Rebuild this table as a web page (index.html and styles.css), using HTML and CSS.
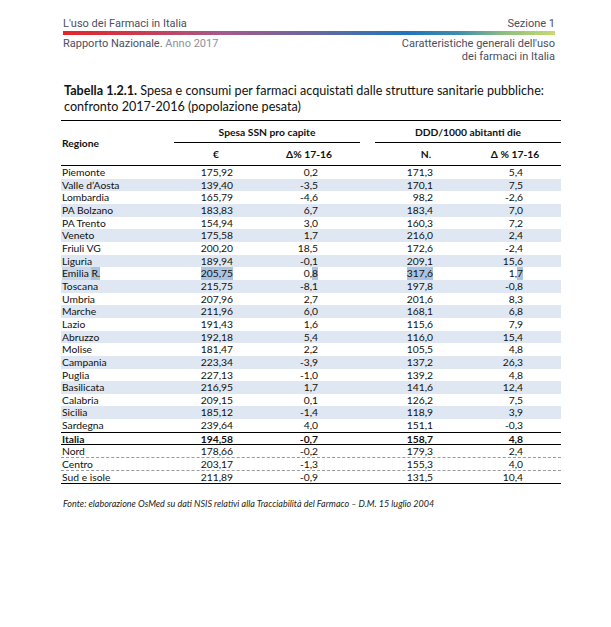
FILE: index.html
```html
<!DOCTYPE html>
<html lang="it">
<head>
<meta charset="utf-8">
<title>Tabella 1.2.1</title>
<link rel="stylesheet" href="styles.css">
</head>
<body>
<div class="page">
  <header class="running">
    <div class="run-row">
      <span>L'uso dei Farmaci in Italia</span>
      <span>Sezione 1</span>
    </div>
    <div class="bar"></div>
    <div class="run-row">
      <span>Rapporto Nazionale. <span class="muted">Anno 2017</span></span>
      <span class="right">Caratteristiche generali dell'uso<br>dei farmaci in Italia</span>
    </div>
  </header>

  <section class="content">
    <p class="caption"><b>Tabella 1.2.1.</b> Spesa e consumi per farmaci acquistati dalle strutture sanitarie pubbliche: confronto 2017-2016 (popolazione pesata)</p>

    <div class="tbl">
      <div class="thead">
        <div class="h-reg">Regione</div>
        <div class="h-group g1">Spesa SSN pro capite</div>
        <div class="h-group g2">DDD/1000 abitanti die</div>
        <div class="h-sub c2">€</div>
        <div class="h-sub c3">Δ% 17-16</div>
        <div class="h-sub c5">N.</div>
        <div class="h-sub c6">Δ % 17-16</div>
      </div>

      <div class="row"><span>Piemonte</span><span>175,92</span><span>0,2</span><i></i><span>171,3</span><span>5,4</span></div>
      <div class="row alt"><span>Valle d’Aosta</span><span>139,40</span><span>-3,5</span><i></i><span>170,1</span><span>7,5</span></div>
      <div class="row"><span>Lombardia</span><span>165,79</span><span>-4,6</span><i></i><span>98,2</span><span>-2,6</span></div>
      <div class="row alt"><span>PA Bolzano</span><span>183,83</span><span>6,7</span><i></i><span>183,4</span><span>7,0</span></div>
      <div class="row"><span>PA Trento</span><span>154,94</span><span>3,0</span><i></i><span>160,3</span><span>7,2</span></div>
      <div class="row alt"><span>Veneto</span><span>175,58</span><span>1,7</span><i></i><span>216,0</span><span>2,4</span></div>
      <div class="row"><span>Friuli VG</span><span>200,20</span><span>18,5</span><i></i><span>172,6</span><span>-2,4</span></div>
      <div class="row alt"><span>Liguria</span><span>189,94</span><span>-0,1</span><i></i><span>209,1</span><span>15,6</span></div>
      <div class="row"><span><mark class="sel-a">Emilia&nbsp;</mark><mark class="sel-b">R.</mark></span><span><mark class="sel-b">205,75</mark></span><span>0,<mark class="sel-b">8</mark></span><i></i><span><mark class="sel-b">317,6</mark></span><span>1,<mark class="sel-b">7</mark></span></div>
      <div class="row alt"><span>Toscana</span><span>215,75</span><span>-8,1</span><i></i><span>197,8</span><span>-0,8</span></div>
      <div class="row"><span>Umbria</span><span>207,96</span><span>2,7</span><i></i><span>201,6</span><span>8,3</span></div>
      <div class="row alt"><span>Marche</span><span>211,96</span><span>6,0</span><i></i><span>168,1</span><span>6,8</span></div>
      <div class="row"><span>Lazio</span><span>191,43</span><span>1,6</span><i></i><span>115,6</span><span>7,9</span></div>
      <div class="row alt"><span>Abruzzo</span><span>192,18</span><span>5,4</span><i></i><span>116,0</span><span>15,4</span></div>
      <div class="row"><span>Molise</span><span>181,47</span><span>2,2</span><i></i><span>105,5</span><span>4,8</span></div>
      <div class="row alt"><span>Campania</span><span>223,34</span><span>-3,9</span><i></i><span>137,2</span><span>26,3</span></div>
      <div class="row"><span>Puglia</span><span>227,13</span><span>-1,0</span><i></i><span>139,2</span><span>4,8</span></div>
      <div class="row alt"><span>Basilicata</span><span>216,95</span><span>1,7</span><i></i><span>141,6</span><span>12,4</span></div>
      <div class="row"><span>Calabria</span><span>209,15</span><span>0,1</span><i></i><span>126,2</span><span>7,5</span></div>
      <div class="row alt"><span>Sicilia</span><span>185,12</span><span>-1,4</span><i></i><span>118,9</span><span>3,9</span></div>
      <div class="row"><span>Sardegna</span><span>239,64</span><span>4,0</span><i></i><span>151,1</span><span>-0,3</span></div>
      <div class="row total"><span>Italia</span><span>194,58</span><span>-0,7</span><i></i><span>158,7</span><span>4,8</span></div>
      <div class="row area dashed"><span>Nord</span><span>178,66</span><span>-0,2</span><i></i><span>179,3</span><span>2,4</span></div>
      <div class="row area dashed"><span>Centro</span><span>203,17</span><span>-1,3</span><i></i><span>155,3</span><span>4,0</span></div>
      <div class="row area last"><span>Sud e isole</span><span>211,89</span><span>-0,9</span><i></i><span>131,5</span><span>10,4</span></div>
    </div>

    <p class="source">Fonte: elaborazione OsMed su dati NSIS relativi alla Tracciabilità del Farmaco – D.M. 15 luglio 2004</p>
  </section>
</div>
</body>
</html>
```

FILE: styles.css
```css
* { box-sizing: border-box; }

html, body {
  margin: 0;
  padding: 0;
  background: #ffffff;
}

.page {
  width: 611px;
  height: 627px;
  padding-top: 17px;
}

/* running header */
.running {
  margin-left: 63px;
  width: 492px;
  font-family: Roboto, "Liberation Sans", sans-serif;
  font-weight: 400;
  font-size: 11px;
  letter-spacing: 0;
  color: #4a4e64;
  line-height: 13px;
}

.run-row {
  display: flex;
  justify-content: space-between;
  align-items: flex-start;
}

.run-row .right {
  text-align: right;
}

.muted {
  color: #8e909c;
}

.bar {
  height: 4px;
  margin: 1px 0 2px;
  background: linear-gradient(90deg,
    #e2262a 0%,
    #d0384a 14%,
    #a55a8a 32%,
    #6f66a0 50%,
    #1f76bc 70%,
    #3c8dae 80%,
    #8fbf80 90%,
    #c6dc6f 100%);
}

/* content */
.content {
  margin-left: 61px;
  width: 500px;
  font-family: Lato, "Open Sans", sans-serif;
  color: #111111;
}

.caption {
  margin: 20px 0 0 3px;
  font-size: 12.6px;
  line-height: 16px;
  height: 37px;
}

.caption b {
  font-weight: 700;
}

.tbl {
  border-top: 1.5px solid #000;
  font-size: 10.3px;
}

.thead {
  display: grid;
  grid-template-columns: 113px 84px 102px 15px 102px 84px;
  grid-template-rows: 22px 22px;
  border-bottom: 1px solid #000;
  font-weight: 700;
}

.h-reg {
  grid-column: 1;
  grid-row: 1 / 3;
  align-self: center;
  padding-left: 1px;
}

.h-group {
  grid-row: 1;
  text-align: center;
  border-bottom: 1px solid #000;
  display: flex;
  align-items: center;
  justify-content: center;
}

.g1 { grid-column: 2 / 4; }
.g2 { grid-column: 5 / 7; }

.h-sub {
  grid-row: 2;
  display: flex;
  align-items: center;
  justify-content: center;
}

.c2 { grid-column: 2; }
.c3 { grid-column: 3; }
.c5 { grid-column: 5; }
.c6 { grid-column: 6; padding-right: 8px; }

.row {
  display: grid;
  grid-template-columns: 113px 84px 102px 15px 102px 84px;
  height: 12.67px;
  line-height: 12.67px;
}

.row.alt {
  background: #dfe7f2;
}

.row span {
  text-align: right;
  white-space: nowrap;
}

.row span:nth-child(1) { text-align: left; padding-left: 1px; }
.row span:nth-child(2) { padding-right: 25px; }
.row span:nth-child(3) { padding-right: 42px; }
.row span:nth-child(5) { padding-right: 44px; }
.row span:nth-child(6) { padding-right: 38px; }

.row.total {
  font-weight: 700;
  border-top: 1.5px solid #000;
  border-bottom: 1px solid #000;
  height: 13.5px;
}

.row.dashed {
  border-bottom: 1px dashed #9a9a9a;
}

.row.last {
  border-bottom: 1.5px solid #000;
}

.row.area {
  height: 13px;
}

mark {
  color: inherit;
  display: inline-block;
  height: 12.67px;
}

.sel-a { background: #c9d9ec; }
.sel-b { background: #a9c3e1; }

.source {
  margin: 14px 0 0 2px;
  font-size: 9px;
  font-style: italic;
  color: #222;
}
```
